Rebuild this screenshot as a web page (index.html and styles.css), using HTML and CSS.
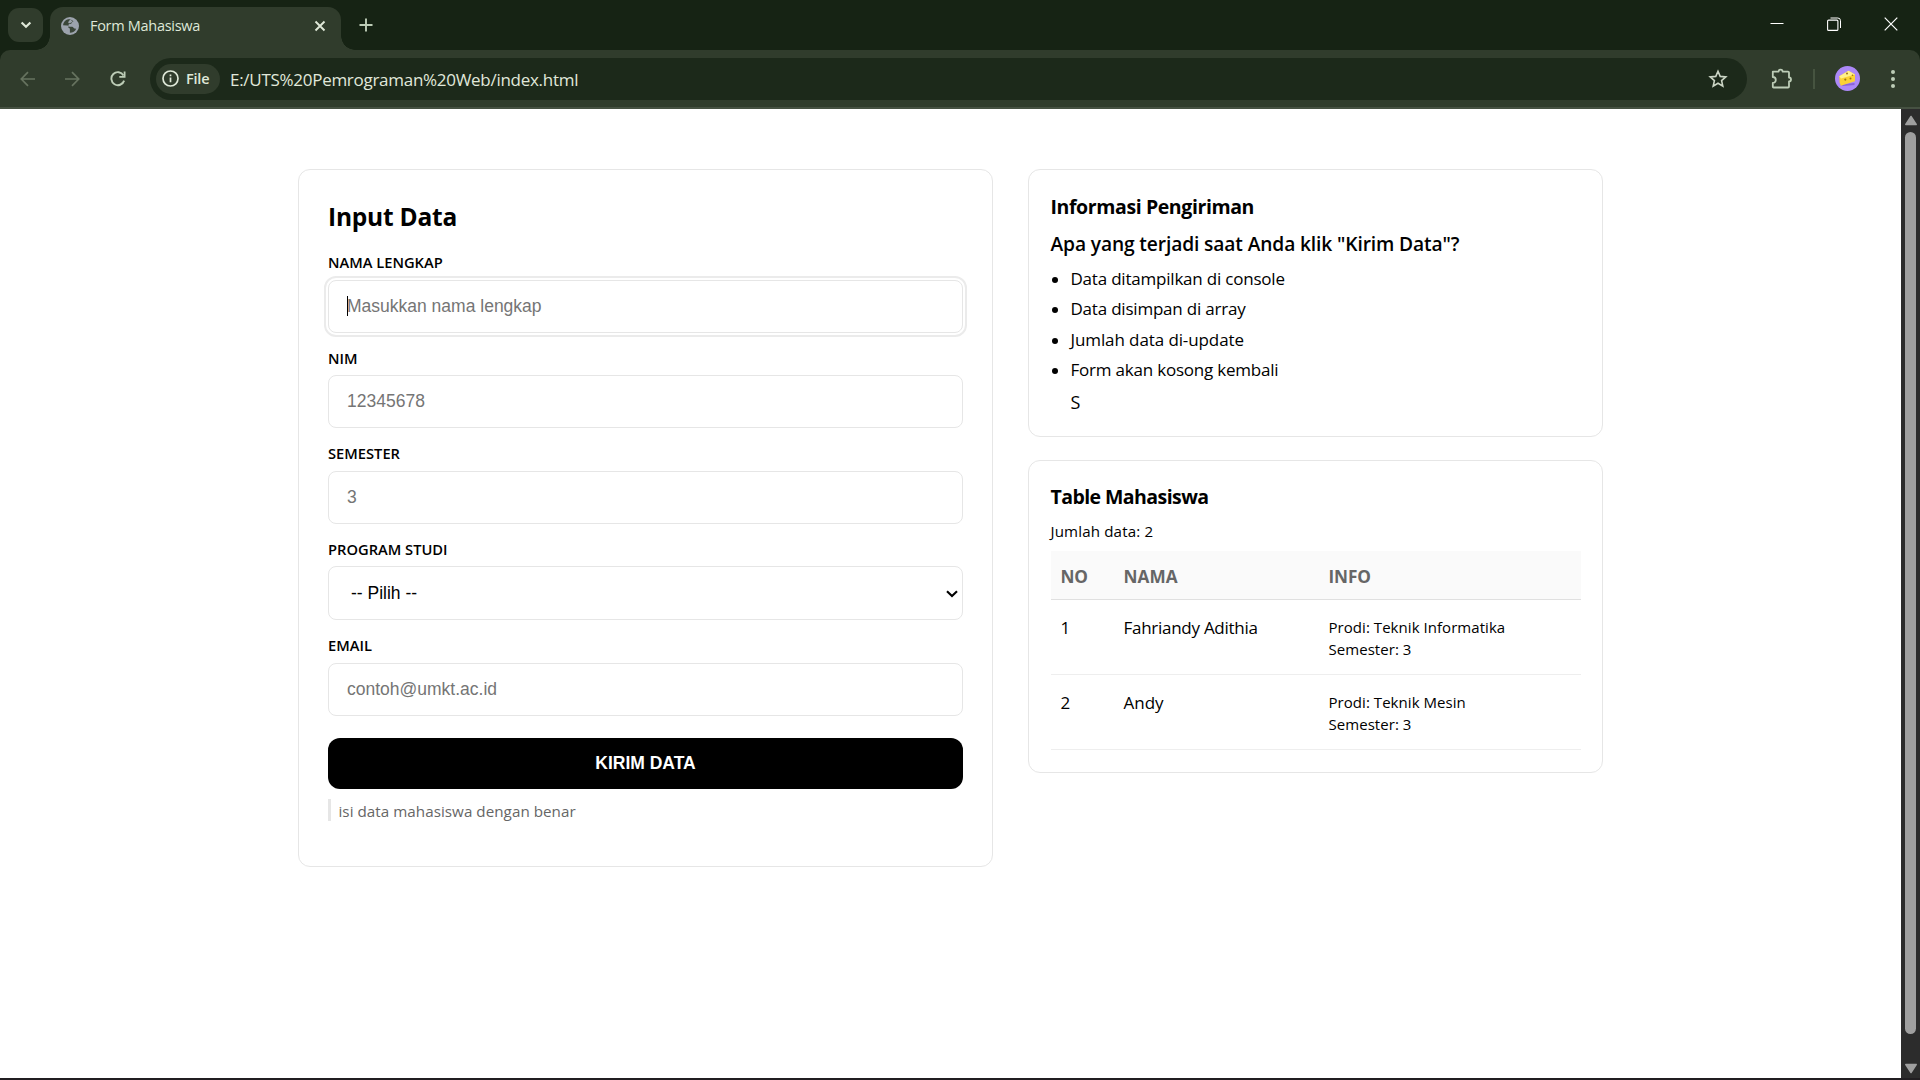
FILE: index.html
```html
<!DOCTYPE html>
<html lang="id">
<head>
<meta charset="utf-8">
<title>Form Mahasiswa</title>
<link rel="stylesheet" href="styles.css">
</head>
<body>
<div class="browser">
  <header class="tabstrip">
    <div class="tab-search"><svg width="12" height="8" viewBox="0 0 12 8"><path d="M1.6 1.5 6 5.8l4.4-4.3" fill="none" stroke="#dfe8d8" stroke-width="2.2"/></svg></div>
    <div class="tab">
      <svg class="globe" width="18" height="18" viewBox="0 0 18 18"><circle cx="9" cy="9" r="9" fill="#9ca3ad"/><path d="M7.2 2.2C4 3 2.3 5.300 2 8.200l4.300.2c1.700 0 1.700 2 .6 2.400 1.600 0 2 .6 2 1.700v3.300c2.800 0 5.400-1.600 6.300-4l-1.800-.4c-1-.3-1.200-1.600-2.200-1.700H8.600c-1.500-.2-1.700-2.500-.1-2.800l1.600-.2c.8-.3.6-1.400 1.500-1.900l.9-.5C10.700 2.600 8.800 2 7.200 2.200Z" fill="#303c2c" opacity=".9"/><path d="M9.400 2.200 7.600 4.500c-1 1.200.2 2.300 1.700 1.600l2.300-1.400z" fill="#9ca3ad"/></svg>
      <span class="tab-title">Form Mahasiswa</span>
      <svg class="tab-close" width="12" height="12" viewBox="0 0 12 12"><path d="M1.500 1.500l9 9M10.500 1.500l-9 9" stroke="#dfe8d8" stroke-width="1.900"/></svg>
    </div>
    <svg class="new-tab" width="14" height="14" viewBox="0 0 14 14"><path d="M7 .5v13M.5 7h13" stroke="#bdcdb7" stroke-width="1.900"/></svg>
    <div class="window-buttons">
      <svg width="14" height="14" viewBox="0 0 14 14"><path d="M.5 6.500h13" stroke="#fff"/></svg>
      <svg width="14" height="14" viewBox="0 0 14 14"><path d="M3.500 1h7.300a2.700 2.700 0 0 1 2.700 2.700V11" fill="none" stroke="#fff" stroke-width="1"/><rect x=".6" y="3.100" width="10.300" height="10.300" rx="1" fill="none" stroke="#fff" stroke-width="1.100"/></svg>
      <svg width="14" height="14" viewBox="0 0 14 14"><path d="M.7.7l12.600 12.600M13.300.7.7 13.300" stroke="#fff" stroke-width="1.200"/></svg>
    </div>
  </header>
  <div class="toolbar">
    <svg class="nav back" width="16" height="16" viewBox="0 0 16 16"><path d="M15 8H1.500M8 1.200 1.300 8 8 14.800" fill="none" stroke="#66735f" stroke-width="1.700"/></svg>
    <svg class="nav forward" width="16" height="16" viewBox="0 0 16 16"><path d="M1 8h13.500M8 1.200 14.700 8 8 14.800" fill="none" stroke="#66735f" stroke-width="1.700"/></svg>
    <svg class="nav reload" width="16" height="16" viewBox="0 0 16 16"><path d="M14.100 9.600A6.500 6.500 0 1 1 13.500 4.400" fill="none" stroke="#bdcdb7" stroke-width="1.900"/><path d="M15.500.6v6.100H9.300V4.900h4.400V.6z" fill="#bdcdb7"/></svg>
    <div class="omnibox">
      <div class="chip"><svg width="17" height="17" viewBox="0 0 17 17"><circle cx="8.500" cy="8.500" r="7.500" fill="none" stroke="#dfe8d8" stroke-width="1.700"/><path d="M8.500 7.600v4.600M8.500 4.600v1.700" stroke="#dfe8d8" stroke-width="1.700"/></svg><span>File</span></div>
      <span class="url">E:/UTS%20Pemrograman%20Web/index.html</span>
      <svg class="star" width="20" height="20" viewBox="0 0 20 20"><path d="M10 2.200l2.200 5.200 5.600.5-4.200 3.700 1.200 5.500L10 14.200l-4.800 2.900 1.200-5.500-4.200-3.700 5.600-.5z" fill="none" stroke="#cbd5c5" stroke-width="1.600"/></svg>
    </div>
    <svg class="puzzle" width="22" height="22" viewBox="0 0 22 22"><path d="M2 3.600h5.600a2 2 0 0 1 4 0H17a1 1 0 0 1 1 1V9.500a2 2 0 0 1 0 4v5a1 1 0 0 1-1 1H2.600a.8.8 0 0 1-.8-.8V15a3 3 0 0 0 0-6V3.600z" fill="none" stroke="#bdcdb7" stroke-width="1.800" stroke-linejoin="round"/></svg>
    <span class="divider"></span>
    <svg class="avatar" width="25" height="25" viewBox="0 0 25 25"><circle cx="12.500" cy="12.500" r="12.500" fill="#ac88f7"/><path d="M5 18.500 19.500 17v2L8 20z" fill="#8a63d8"/><path d="M4.300 10.300 13.500 4.700l6.500 3.800v6.800L5.800 19.800l-1.200-3.600z" fill="#fbd235"/><path d="M4.300 10.300 13.500 4.700l6.500 3.800-14 4z" fill="#fff08a"/><g fill="#9b7316"><circle cx="12" cy="7.600" r="1"/><circle cx="10.300" cy="13.600" r="1.100"/><circle cx="15.500" cy="12.500" r="1"/><circle cx="17.500" cy="9.300" r=".8"/></g></svg>
    <svg class="menu" width="4" height="18" viewBox="0 0 4 18"><g fill="#bdcdb7"><circle cx="2" cy="2" r="2"/><circle cx="2" cy="9" r="2"/><circle cx="2" cy="16" r="2"/></g></svg>
  </div>
  <div class="viewport">
    <main class="page">
      <section class="card form-card">
        <h2>Input Data</h2>
        <form>
          <div class="field focused"><label for="nama">NAMA LENGKAP</label><div class="control"><input id="nama" placeholder="Masukkan nama lengkap"><i class="caret"></i></div></div>
          <div class="field raised"><label class="low" for="nim">NIM</label><div class="control"><input id="nim" placeholder="12345678"></div></div>
          <div class="field"><label for="semester">SEMESTER</label><div class="control"><input id="semester" placeholder="3"></div></div>
          <div class="field"><label class="low" for="prodi">PROGRAM STUDI</label><div class="control"><select id="prodi"><option>-- Pilih --</option></select><svg class="chevron" width="12" height="8" viewBox="0 0 12 8"><path d="M1 1.300l5 4.800 5-4.800" fill="none" stroke="#000" stroke-width="2.100"/></svg></div></div>
          <div class="field"><label for="email">EMAIL</label><div class="control"><input id="email" placeholder="contoh@umkt.ac.id"></div></div>
          <button type="button">KIRIM DATA</button>
          <p class="note">isi data mahasiswa dengan benar</p>
        </form>
      </section>
      <div class="side">
        <section class="card info-card">
          <h3>Informasi Pengiriman</h3>
          <h4>Apa yang terjadi saat Anda klik "Kirim Data"?</h4>
          <ul>
            <li>Data ditampilkan di console</li>
            <li>Data disimpan di array</li>
            <li class="loose">Jumlah data di-update</li>
            <li>Form akan kosong kembali</li>
          </ul>
          <p class="extra">S</p>
        </section>
        <section class="card table-card">
          <h3>Table Mahasiswa</h3>
          <p class="count">Jumlah data: 2</p>
          <table>
            <thead><tr><th class="c-no">NO</th><th class="c-nama">NAMA</th><th>INFO</th></tr></thead>
            <tbody>
              <tr><td>1</td><td class="name">Fahriandy Adithia</td><td class="detail">Prodi: Teknik Informatika<br>Semester: 3</td></tr>
              <tr><td>2</td><td>Andy</td><td class="detail">Prodi: Teknik Mesin<br>Semester: 3</td></tr>
            </tbody>
          </table>
        </section>
      </div>
    </main>
    <div class="scrollbar"><svg width="14" height="11" viewBox="0 0 14 11"><path d="M7 1.500 12.200 9.500H1.800z" fill="#9f9f9f" stroke="#9f9f9f" stroke-width="1.500" stroke-linejoin="round"/></svg><span class="thumb"></span><svg width="14" height="11" viewBox="0 0 14 11"><path d="M7 9.500 12.200 1.500H1.800z" fill="#9f9f9f" stroke="#9f9f9f" stroke-width="1.500" stroke-linejoin="round"/></svg></div>
  </div>
</div>
</body>
</html>
```
FILE: styles.css
```css
* { box-sizing: border-box; }
body { margin: 0; font-family: "Open Sans", "Noto Sans", sans-serif; color: #000; background: #fff; }
h2, h3, h4, p, ul { margin: 0; }
.browser { width: 1920px; height: 1080px; display: flex; flex-direction: column; overflow: hidden; background: #162314; }

.tabstrip { height: 50px; display: flex; align-items: flex-start; background: #162314; flex: none; }
.tab-search { width: 35px; height: 34px; margin: 8px 7px 0 8px; border-radius: 11px; background: #303c2c; display: flex; align-items: center; justify-content: center; }
.tab { position: relative; width: 291px; height: 43px; margin-top: 7px; padding: 0 15px 6px 11px; border-radius: 13px 13px 0 0; background: #303c2c; display: flex; align-items: center; }
.tab::before, .tab::after { content: ""; position: absolute; bottom: 0; width: 14px; height: 14px; }
.tab::before { left: -14px; background: radial-gradient(circle at 0 0, transparent 13.5px, #303c2c 14px); }
.tab::after { right: -14px; background: radial-gradient(circle at 100% 0, transparent 13.5px, #303c2c 14px); }
.tab-title { margin-left: 11px; flex: 1; font-size: 14.5px; line-height: 20px; letter-spacing: -.3px; color: #dfe8d8; }
.new-tab { margin: 18px 0 0 18px; }
.window-buttons { margin: 17px 22px 0 auto; display: flex; gap: 43px; }

.toolbar { height: 59px; display: flex; align-items: center; background: #303c2c; border-bottom: 2px solid #465142; border-radius: 10px 10px 0 0; padding: 0 20px; flex: none; }
.forward { margin-left: 28px; }
.reload { margin-left: 30px; }
.omnibox { width: 1597px; height: 42px; margin-left: 24px; padding: 0 19px 0 6px; border-radius: 21px; background: #1c291a; display: flex; align-items: center; }
.chip { width: 64px; height: 30px; padding-left: 6px; border-radius: 15px; background: #303c2c; display: flex; align-items: center; gap: 7px; font-size: 14.5px; font-weight: 600; letter-spacing: -.2px; color: #dfe8d8; }
.url { margin-left: 10px; padding-top: 1px; flex: 1; font-size: 17px; letter-spacing: -.28px; color: #e0e8da; }
.puzzle { margin-left: 24px; }
.divider { width: 2px; height: 20px; margin-left: 20px; background: #465440; }
.avatar { margin-left: 20px; }
.menu { margin-left: 31px; }

.viewport { flex: 1; display: flex; background: #fff; border-bottom: 2px solid #211e21; min-height: 0; }
.page { flex: 1; display: flex; align-items: flex-start; gap: 35px; padding: 60px 298px; }
.card { border: 1px solid #e6e6e6; border-radius: 12px; background: #fff; }
.form-card { width: 695px; height: 698px; padding: 29px; flex: none; }
.form-card h2 { height: 48.8px; font-size: 24.5px; line-height: 36px; font-weight: 700; letter-spacing: -.22px; }
.field { margin-bottom: 10.3px; }
.field label { display: block; height: 32px; font-size: 14.7px; line-height: 28.6px; font-weight: 600; }
.field .low { line-height: 30.4px; }
.control { position: relative; display: flex; }
input, select { width: 100%; height: 53.2px; margin: 0; padding: 0 18px; border: 1px solid #e6e6e6; border-radius: 8px; background: #fff; font-family: "Liberation Sans", Arial, sans-serif; font-size: 17.5px; outline: none; }
.raised input { padding-bottom: 1px; }
input::placeholder { color: #757575; }
select { height: 54px; padding: 0 22px 1px; appearance: none; color: #000; }
.focused input { outline: 2px solid #ebebeb; outline-offset: 2px; }
.caret { position: absolute; left: 19px; top: 16px; width: 1px; height: 20px; background: #000; }
.chevron { position: absolute; right: 5px; top: 24px; }
button { display: block; width: 100%; height: 51px; margin: 22px 0 10px; padding: 0; border: 0; border-radius: 12px; background: #000; color: #fff; font-family: "Liberation Sans", Arial, sans-serif; font-size: 17.5px; font-weight: 700; }
.note { height: 22px; padding-left: 7.5px; border-left: 3px solid #e6e6e6; font-size: 15.2px; line-height: 24px; letter-spacing: .04px; color: #666; }

.side { width: 575px; display: flex; flex-direction: column; gap: 23px; flex: none; }
.side .card { padding: 22px 22px 22px 21.5px; }
.info-card { height: 268px; }
.table-card { height: 313px; }
h3 { height: 30px; font-size: 19.5px; line-height: 30px; font-weight: 700; letter-spacing: -.4px; }
.table-card h3 { line-height: 28px; letter-spacing: -.57px; }
h4 { height: 37px; margin-top: 5px; font-size: 19.2px; line-height: 34px; font-weight: 600; letter-spacing: -.12px; }
ul { padding-left: 20px; list-style: none; }
li { position: relative; height: 30.4px; font-size: 17px; line-height: 30px; letter-spacing: -.21px; }
.loose { letter-spacing: -.1px; }
li::before { content: ""; position: absolute; left: -19px; top: 13px; width: 6px; height: 6px; border-radius: 50%; background: #000; }
.extra { padding-left: 20px; font-size: 18px; line-height: 32px; }
.count { height: 38px; font-size: 15.1px; line-height: 36px; letter-spacing: .15px; }
table { width: 530px; table-layout: fixed; border-collapse: collapse; }
th { height: 48px; padding: 3px 10px 0; text-align: left; background: #fafafa; border-bottom: 1px solid #e0e0e0; font-size: 17.2px; letter-spacing: -.1px; color: #666; }
.c-no { width: 63px; }
.c-nama { width: 205px; letter-spacing: .1px; }
td { height: 75px; padding: 14px 10px 0; vertical-align: top; border-bottom: 1px solid #eee; font-size: 17px; line-height: 28px; }
.name { letter-spacing: -.27px; }
.detail { font-size: 15px; line-height: 22px; letter-spacing: .05px; padding-top: 16px; }

.scrollbar { width: 19px; background: #2c2c2c; display: flex; flex-direction: column; align-items: center; padding: 6px 0 4px; flex: none; }
.thumb { width: 11px; height: 902px; margin: 6px 0 auto; border-radius: 6px; background: #9f9f9f; }
```
